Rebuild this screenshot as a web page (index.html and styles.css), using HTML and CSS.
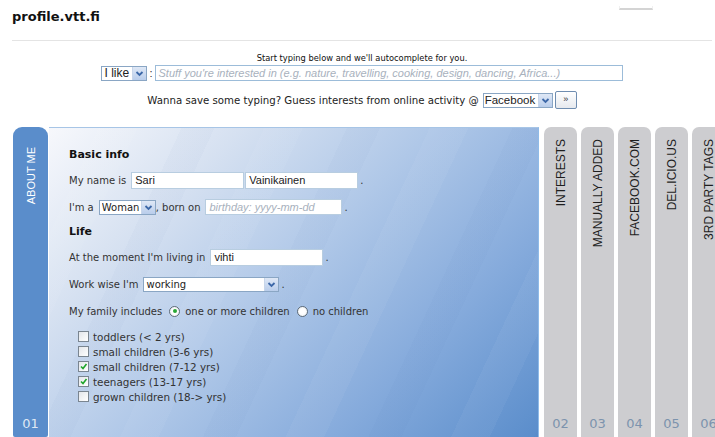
FILE: index.html
```html
<!DOCTYPE html>
<html lang="en">
<head>
<meta charset="utf-8">
<title>profile.vtt.fi</title>
<link rel="stylesheet" href="styles.css">
</head>
<body>
<header class="top">
  <h1 class="logo">profile.vtt.fi</h1>
  <span class="corner-tab"></span>
</header>

<section class="search">
  <p class="hint">Start typing below and we'll autocomplete for you.</p>
  <div class="like-row">
    <span class="select sel-like"><span class="sel-text">I like</span><span class="arrow"><svg viewBox="0 0 9 9" width="9" height="9"><path d="M1.5 3 L4.5 6 L7.5 3" fill="none" stroke="#3d68a8" stroke-width="1.8"/></svg></span></span>
    <span class="colon">:</span>
    <span class="field field-wide placeholder">Stuff you're interested in (e.g. nature, travelling, cooking, design, dancing, Africa...)</span>
  </div>
  <div class="guess-row">
    <span class="guess-text">Wanna save some typing? Guess interests from online activity @</span>
    <span class="select sel-fb"><span class="sel-text">Facebook</span><span class="arrow"><svg viewBox="0 0 9 9" width="9" height="9"><path d="M1.5 3 L4.5 6 L7.5 3" fill="none" stroke="#3d68a8" stroke-width="1.8"/></svg></span></span>
    <span class="go-btn">»</span>
  </div>
</section>

<main class="profile">
  <div class="tab tab-active">
    <span class="tab-label">ABOUT ME</span>
    <span class="tab-num">01</span>
  </div>

  <div class="panel">
    <h2 class="sec-title">Basic info</h2>
    <div class="row">
      <span>My name is</span>
      <span class="field f-name gap-l">Sari</span>
      <span class="field f-name gap-1">Vainikainen</span>
      <span class="dot">.</span>
    </div>
    <div class="row">
      <span>I'm a</span>
      <span class="select sel-gender gap-l"><span class="sel-text">Woman</span><span class="arrow"><svg viewBox="0 0 9 9" width="9" height="9"><path d="M1.5 3 L4.5 6 L7.5 3" fill="none" stroke="#3d68a8" stroke-width="1.8"/></svg></span></span>
      <span>, born on</span>
      <span class="field f-birth gap-l placeholder">birthday: yyyy-mm-dd</span>
      <span class="dot">.</span>
    </div>
    <h2 class="sec-title">Life</h2>
    <div class="row">
      <span>At the moment I'm living in</span>
      <span class="field f-city gap-l">vihti</span>
      <span class="dot">.</span>
    </div>
    <div class="row">
      <span>Work wise I'm</span>
      <span class="select sel-work gap-l"><span class="sel-text">working</span><span class="arrow"><svg viewBox="0 0 9 9" width="9" height="9"><path d="M1.5 3 L4.5 6 L7.5 3" fill="none" stroke="#3d68a8" stroke-width="1.8"/></svg></span></span>
      <span class="dot">.</span>
    </div>
    <div class="row">
      <span>My family includes</span>
      <span class="radio checked gap-r"></span>
      <span>one or more children</span>
      <span class="radio gap-r"></span>
      <span>no children</span>
    </div>
    <ul class="checklist">
      <li><span class="check"></span>toddlers (&lt; 2 yrs)</li>
      <li><span class="check"></span>small children (3-6 yrs)</li>
      <li><span class="check checked"><svg viewBox="0 0 9 9" width="9" height="9"><path d="M2 4.5 L4 6.5 L7.5 2" fill="none" stroke="#1fa52a" stroke-width="1.6"/></svg></span>small children (7-12 yrs)</li>
      <li><span class="check checked"><svg viewBox="0 0 9 9" width="9" height="9"><path d="M2 4.5 L4 6.5 L7.5 2" fill="none" stroke="#1fa52a" stroke-width="1.6"/></svg></span>teenagers (13-17 yrs)</li>
      <li><span class="check"></span>grown children (18-&gt; yrs)</li>
    </ul>
  </div>

  <div class="tabs-rest">
    <div class="tab"><span class="tab-label">INTERESTS</span><span class="tab-num">02</span></div>
    <div class="tab"><span class="tab-label">MANUALLY ADDED</span><span class="tab-num">03</span></div>
    <div class="tab"><span class="tab-label">FACEBOOK.COM</span><span class="tab-num">04</span></div>
    <div class="tab"><span class="tab-label">DEL.ICIO.US</span><span class="tab-num">05</span></div>
    <div class="tab"><span class="tab-label">3RD PARTY TAGS</span><span class="tab-num">06</span></div>
  </div>
</main>
</body>
</html>
```

FILE: styles.css
```css
html, body {
  margin: 0;
  padding: 0;
  overflow: hidden;
  background: #fff;
  font-family: "DejaVu Sans", Verdana, sans-serif;
  color: #333;
}

/* header */
.top {
  position: relative;
  margin: 0 3px 0 12px;
  height: 40px;
  border-bottom: 1px solid #e4e4e4;
}
.logo {
  margin: 0;
  padding-top: 9px;
  font: bold 13px/16px "DejaVu Sans", sans-serif;
  color: #111;
}
.corner-tab {
  position: absolute;
  left: 607px;
  top: 6px;
  width: 32px;
  height: 2px;
  border: 1px solid #f0f0f0;
  border-top: 0;
  border-bottom: 2px solid #d4d4d4;
}

/* autocomplete + guess */
.search {
  margin: 0 3px 0 12px;
  display: flex;
  flex-direction: column;
  align-items: center;
}
.hint {
  margin: 12px 0 0;
  font-size: 8.3px;
  line-height: 10px;
  color: #111;
}
.like-row {
  display: flex;
  align-items: center;
  height: 16px;
  margin-top: 2px;
}
.colon {
  font: 11px "Liberation Sans", sans-serif;
  margin: 0 2px 0 2px;
}
.guess-row {
  display: flex;
  align-items: center;
  margin-top: 10px;
  height: 18px;
}
.guess-text {
  font-size: 10.2px;
  color: #222;
  margin-right: 4px;
}

/* generic controls */
.select {
  display: inline-flex;
  align-items: center;
  flex-shrink: 0;
  box-sizing: border-box;
  height: 15px;
  border: 1px solid #8aa6c4;
  background: #fff;
  padding-left: 2px;
  font: 11px "Liberation Sans", sans-serif;
  color: #222;
}
.sel-text { flex: 1; white-space: nowrap; overflow: hidden; }
.arrow {
  flex-shrink: 0;
  width: 13px;
  height: 13px;
  margin-left: 1px;
  background: linear-gradient(#dfe8f6, #b9cdeb);
  border-left: 1px solid #c8d6ea;
  display: flex;
  align-items: center;
  justify-content: center;
}
.sel-like { width: 46px; font-size: 12px; }
.sel-fb { width: 70px; font-size: 11.5px; padding-left: 1px; }
.sel-gender { width: 57px; font-family: "DejaVu Sans", sans-serif; font-size: 10px; }
.sel-work { width: 136px; font-family: "DejaVu Sans", sans-serif; font-size: 10px; }

.field {
  display: inline-flex;
  align-items: center;
  flex-shrink: 0;
  box-sizing: border-box;
  height: 17px;
  padding-left: 3px;
  border: 1px solid #b8cde0;
  background: #fff;
  font: 11px "Liberation Sans", sans-serif;
  color: #222;
  white-space: nowrap;
  overflow: hidden;
}
.placeholder {
  font-style: italic;
  color: #a8b1bd;
}
.field-wide { width: 468px; height: 16px; border-color: #9cbcd9; }
.f-name { width: 113px; }
.f-birth { width: 137px; height: 16px; }
.f-city { width: 113px; }

.go-btn {
  flex-shrink: 0;
  box-sizing: border-box;
  width: 22px;
  height: 18px;
  margin-left: 2px;
  border: 1px solid #6f8db0;
  border-radius: 2px;
  background: linear-gradient(#fff, #e6e9ee);
  font: 9px/15px "Liberation Sans", sans-serif;
  text-align: center;
  color: #333;
}

/* profile area */
.profile {
  display: flex;
  height: 310px;
  margin-top: 18px;
  padding-left: 13px;
}
.tab {
  flex-shrink: 0;
  box-sizing: border-box;
  width: 33px;
  height: 100%;
  display: flex;
  flex-direction: column;
  align-items: center;
  justify-content: space-between;
  padding: 12px 0 6px;
  background: #cdcdd0;
  border-radius: 7px 7px 0 0;
}
.tab-label {
  writing-mode: vertical-rl;
  transform: rotate(180deg);
  font: 12px "Liberation Sans", Arial, sans-serif;
  color: #1e1e1e;
  white-space: nowrap;
}
.tab-num {
  font: 13px "DejaVu Sans", sans-serif;
  color: #7c93ad;
}
.tab-active {
  width: 35px;
  background: #5a8dcb;
  border-radius: 9px 9px 2px 2px;
  padding-top: 20px;
}
.tab-active .tab-label {
  color: #fff;
  font-size: 11px;
}
.tab-active .tab-num { color: #dfe8f4; }

.panel {
  flex-shrink: 0;
  box-sizing: border-box;
  width: 490px;
  margin-left: 1px;
  height: 100%;
  padding: 20px 0 0 20px;
  display: flex;
  flex-direction: column;
  gap: 9px;
  border-top: 1px solid #a7c5e6;
  border-right: 1px solid #8fbbe8;
  background:
    repeating-linear-gradient(115deg,
      rgba(255,255,255,0) 0 45px,
      rgba(255,255,255,.045) 45px 80px,
      rgba(255,255,255,0) 80px 120px,
      rgba(40,80,150,.025) 120px 150px),
    linear-gradient(135deg, #f7f8fc 0%, #d6e1f1 24%, #b0c8e8 48%, #86abdc 74%, #5a8dcb 100%);
}
.sec-title {
  margin: 0;
  height: 14px;
  font: bold 11px/14px "DejaVu Sans", sans-serif;
  color: #111;
}
.row {
  display: flex;
  align-items: center;
  height: 18px;
  font-size: 10px;
  color: #333;
  white-space: pre;
}
.gap-l { margin-left: 5px; }
.gap-1 { margin-left: 1px; }
.gap-r { margin: 0 5px 0 7px; }
.dot { margin-left: 2px; }

.radio {
  flex-shrink: 0;
  box-sizing: border-box;
  width: 11px;
  height: 11px;
  border-radius: 50%;
  border: 1px solid #5f6c78;
  background: radial-gradient(circle, #fff 0 40%, #e4e7ea 100%);
  display: flex;
  align-items: center;
  justify-content: center;
}
.radio.checked::after {
  content: "";
  width: 4px;
  height: 4px;
  border-radius: 50%;
  background: #2aa836;
}

.checklist {
  list-style: none;
  margin: 0;
  padding: 0 0 0 9px;
}
.checklist li {
  display: flex;
  align-items: center;
  height: 15px;
  font-size: 10.4px;
  color: #333;
}
.check {
  flex-shrink: 0;
  box-sizing: border-box;
  width: 11px;
  height: 11px;
  margin-right: 4px;
  border: 1px solid #7a8590;
  background: linear-gradient(135deg, #e3e6ea, #fff);
  display: flex;
  align-items: center;
  justify-content: center;
}

.tabs-rest {
  flex-shrink: 0;
  display: flex;
  gap: 4px;
  margin-left: 5px;
}
```
